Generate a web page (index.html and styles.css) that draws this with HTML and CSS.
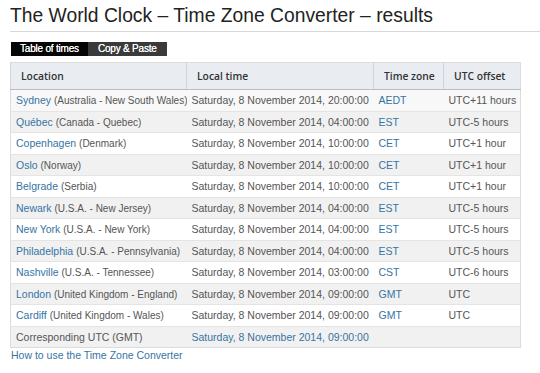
FILE: index.html
```html
<!DOCTYPE html>
<html lang="en">
<head>
<meta charset="utf-8">
<title>The World Clock – Time Zone Converter – results</title>
<link rel="stylesheet" href="styles.css">
</head>
<body>
<main class="page">
  <h1 class="title">The World Clock – Time Zone Converter – results</h1>

  <nav class="tabs">
    <span class="tab tab-active">Table of times</span>
    <span class="tab">Copy &amp; Paste</span>
  </nav>

  <table class="times">
    <colgroup>
      <col class="c-loc"><col class="c-time"><col class="c-tz"><col class="c-off">
    </colgroup>
    <thead>
      <tr><th>Location</th><th>Local time</th><th>Time zone</th><th>UTC offset</th></tr>
    </thead>
    <tbody>
      <tr class="first"><td><a href="#">Sydney</a> <span class="region">(Australia - New South Wales)</span></td><td>Saturday, 8 November 2014, 20:00:00</td><td><a href="#">AEDT</a></td><td>UTC+11 hours</td></tr>
      <tr><td><a href="#">Québec</a> <span class="region">(Canada - Quebec)</span></td><td>Saturday, 8 November 2014, 04:00:00</td><td><a href="#">EST</a></td><td>UTC-5 hours</td></tr>
      <tr><td><a href="#">Copenhagen</a> <span class="region">(Denmark)</span></td><td>Saturday, 8 November 2014, 10:00:00</td><td><a href="#">CET</a></td><td>UTC+1 hour</td></tr>
      <tr><td><a href="#">Oslo</a> <span class="region">(Norway)</span></td><td>Saturday, 8 November 2014, 10:00:00</td><td><a href="#">CET</a></td><td>UTC+1 hour</td></tr>
      <tr><td><a href="#">Belgrade</a> <span class="region">(Serbia)</span></td><td>Saturday, 8 November 2014, 10:00:00</td><td><a href="#">CET</a></td><td>UTC+1 hour</td></tr>
      <tr><td><a href="#">Newark</a> <span class="region">(U.S.A. - New Jersey)</span></td><td>Saturday, 8 November 2014, 04:00:00</td><td><a href="#">EST</a></td><td>UTC-5 hours</td></tr>
      <tr><td><a href="#">New York</a> <span class="region">(U.S.A. - New York)</span></td><td>Saturday, 8 November 2014, 04:00:00</td><td><a href="#">EST</a></td><td>UTC-5 hours</td></tr>
      <tr><td><a href="#">Philadelphia</a> <span class="region">(U.S.A. - Pennsylvania)</span></td><td>Saturday, 8 November 2014, 04:00:00</td><td><a href="#">EST</a></td><td>UTC-5 hours</td></tr>
      <tr><td><a href="#">Nashville</a> <span class="region">(U.S.A. - Tennessee)</span></td><td>Saturday, 8 November 2014, 03:00:00</td><td><a href="#">CST</a></td><td>UTC-6 hours</td></tr>
      <tr><td><a href="#">London</a> <span class="region">(United Kingdom - England)</span></td><td>Saturday, 8 November 2014, 09:00:00</td><td><a href="#">GMT</a></td><td>UTC</td></tr>
      <tr><td><a href="#">Cardiff</a> <span class="region">(United Kingdom - Wales)</span></td><td>Saturday, 8 November 2014, 09:00:00</td><td><a href="#">GMT</a></td><td>UTC</td></tr>
      <tr><td>Corresponding UTC (GMT)</td><td><a href="#">Saturday, 8 November 2014, 09:00:00</a></td><td></td><td></td></tr>
    </tbody>
  </table>

  <a class="help" href="#">How to use the Time Zone Converter</a>
</main>
</body>
</html>
```

FILE: styles.css
```css
html, body {
  margin: 0;
  padding: 0;
  background: #fff;
}

body {
  font-family: "Liberation Sans", Arial, sans-serif;
  color: #444;
  font-size: 10.5px;
}

.page {
  padding: 4px 0 0 10px;
}

a {
  color: #3674a3;
  text-decoration: none;
}

.title {
  margin: 0;
  padding: 0 0 3px 0;
  font-size: 19.3px;
  font-weight: normal;
  line-height: 24px;
  color: #222;
  border-bottom: 1px solid #d8d8d8;
}

.tabs {
  display: flex;
  margin-top: 10px;
  margin-left: 1px;
}

.tab {
  display: block;
  height: 14px;
  line-height: 14px;
  padding: 0 10px;
  font-size: 10px;
  color: #fff;
  background: #3a3a3a;
  letter-spacing: -0.2px;
  text-shadow: 0 0 0.4px #fff;
}

.tab-active {
  padding: 0 9px;
  background: #050505;
}

.times {
  margin-top: 6px;
  width: 510px;
  border-collapse: collapse;
  table-layout: fixed;
  border: 1px solid #dcdcdc;
}

.c-loc { width: 176px; }
.c-time { width: 187px; }
.c-tz { width: 70px; }
.c-off { width: 77px; }

.times th {
  background: #e9edf2;
  height: 26px;
  padding: 0 0 0 10px;
  text-align: left;
  font-family: "Open Sans", "DejaVu Sans", sans-serif;
  font-weight: 600;
  font-size: 10.3px;
  color: #333;
  border-left: 1px solid #d0d4da;
  border-bottom: 1px solid #b9bcc0;
}

.times td {
  height: 20.5px;
  padding: 0 0 0 5px;
  white-space: nowrap;
  overflow: hidden;
  border-top: 1px solid #e4e4e4;
  color: #555;
}

.times tbody tr:nth-child(even) {
  background: #f1f1f1;
}

.times tbody tr.first {
  background: #f8f8f8;
}

.region {
  font-size: 10px;
  color: #555;
}

.help {
  display: block;
  margin-top: 1px;
  margin-left: 1px;
}
```
